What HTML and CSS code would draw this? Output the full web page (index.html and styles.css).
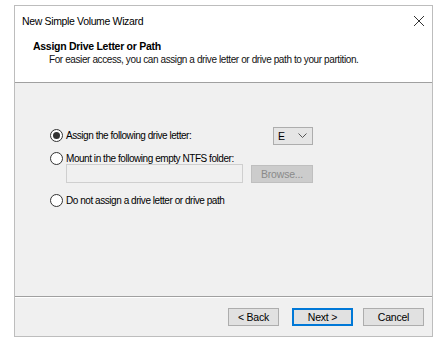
FILE: index.html
```html
<!DOCTYPE html>
<html>
<head>
<meta charset="utf-8">
<link rel="stylesheet" href="styles.css">
</head>
<body>
<div class="window">
  <div class="top">
    <div class="titlebar">
      <span class="title">New Simple Volume Wizard</span>
      <svg class="close" width="12" height="12" viewBox="0 0 12 12"><path d="M1 1 L11 11 M11 1 L1 11" stroke="#333" stroke-width="1" fill="none"/></svg>
    </div>
    <div class="header">
      <div class="h-title">Assign Drive Letter or Path</div>
      <div class="h-sub">For easier access, you can assign a drive letter or drive path to your partition.</div>
    </div>
  </div>
  <div class="content">
    <div class="row row1">
      <label class="opt"><span class="radio checked"></span>Assign the following drive letter:</label>
      <div class="select"><span>E</span><svg width="9" height="5" viewBox="0 0 9 5"><path d="M0.5 0.5 L4.5 4.5 L8.5 0.5" stroke="#555" fill="none"/></svg></div>
    </div>
    <label class="opt row2"><span class="radio"></span>Mount in the following empty NTFS folder:</label>
    <div class="row row-field">
      <div class="field"></div>
      <div class="btn disabled">Browse...</div>
    </div>
    <label class="opt row3"><span class="radio"></span>Do not assign a drive letter or drive path</label>
  </div>
  <div class="footer">
    <div class="btn">&lt; Back</div>
    <div class="btn default">Next &gt;</div>
    <div class="btn cancel">Cancel</div>
  </div>
</div>
</body>
</html>
```
FILE: styles.css
```css
* { box-sizing: border-box; }
html, body { margin: 0; background: #fff; }
body {
  padding: 5px 0 0 14px;
  font-family: "Liberation Sans", Arial, sans-serif;
  font-size: 11px;
  color: #000;
}
.window {
  width: 419px;
  height: 332px;
  border: 1px solid #bdbdbd;
  background: #f0f0f0;
  display: flex;
  flex-direction: column;
}
.top { background: #fff; border-bottom: 1px solid #a0a0a0; height: 77px; }
.titlebar {
  height: 29px;
  display: flex;
  align-items: center;
  justify-content: space-between;
  padding: 0 7px 0 7px;
}
.title { font-size: 10.5px; letter-spacing: -0.35px; color: #000; }
.header { padding-left: 18px; }
.h-title { font-weight: bold; font-size: 10.5px; letter-spacing: -0.28px; line-height: 13px; margin-top: 5px; }
.h-sub { padding-left: 16px; line-height: 13px; font-size: 10px; letter-spacing: -0.4px; color: #111; }
.content {
  flex: 1;
  padding: 43px 0 0 35px;
  border-bottom: 1px solid #a0a0a0;
  box-shadow: 0 1px 0 #fff;
}
.row { display: flex; align-items: center; }
.row1 { justify-content: space-between; width: 263px; height: 19px; }
.opt {
  display: flex;
  align-items: center;
  height: 16px;
  font-size: 10px;
  letter-spacing: -0.45px;
}
.radio {
  width: 13px; height: 13px;
  border: 1px solid #333;
  border-radius: 50%;
  background: #fff;
  margin-right: 3px;
  display: inline-flex;
  align-items: center;
  justify-content: center;
  flex: none;
}
.radio.checked::after {
  content: "";
  width: 7px; height: 7px;
  border-radius: 50%;
  background: #333;
}
.row2 { margin-top: 5px; }
.select {
  width: 40px; height: 18px;
  border: 1px solid #adadad;
  background: #e5e5e5;
  display: flex;
  align-items: center;
  justify-content: space-between;
  padding: 0 5px 0 4px;
  font-size: 10.5px;
}
.row-field { margin-top: -2px; padding-left: 16px; gap: 8px; }
.field {
  width: 177px; height: 19px;
  border: 1px solid #cfcfcf;
  background: #f0f0f0;
}
.btn {
  width: 62px; height: 18px;
  border: 1px solid #adadad;
  background: #e1e1e1;
  display: flex;
  align-items: center;
  justify-content: center;
  font-size: 10.5px;
  letter-spacing: -0.2px;
}
.btn.disabled { background: #cccccc; border-color: #bfbfbf; color: #8a8a8a; }
.row3 { margin-top: 9px; }
.footer {
  height: 39px;
  display: flex;
  align-items: center;
  justify-content: flex-end;
  padding: 0 8px 0 0;
}
.footer .btn { width: 51px; }
.footer .btn.default { width: 61px; margin-left: 13px; border: 1px solid #0078d7; box-shadow: inset 0 0 0 1px #0078d7; }
.footer .btn.cancel { width: 61px; margin-left: 10px; }
```
